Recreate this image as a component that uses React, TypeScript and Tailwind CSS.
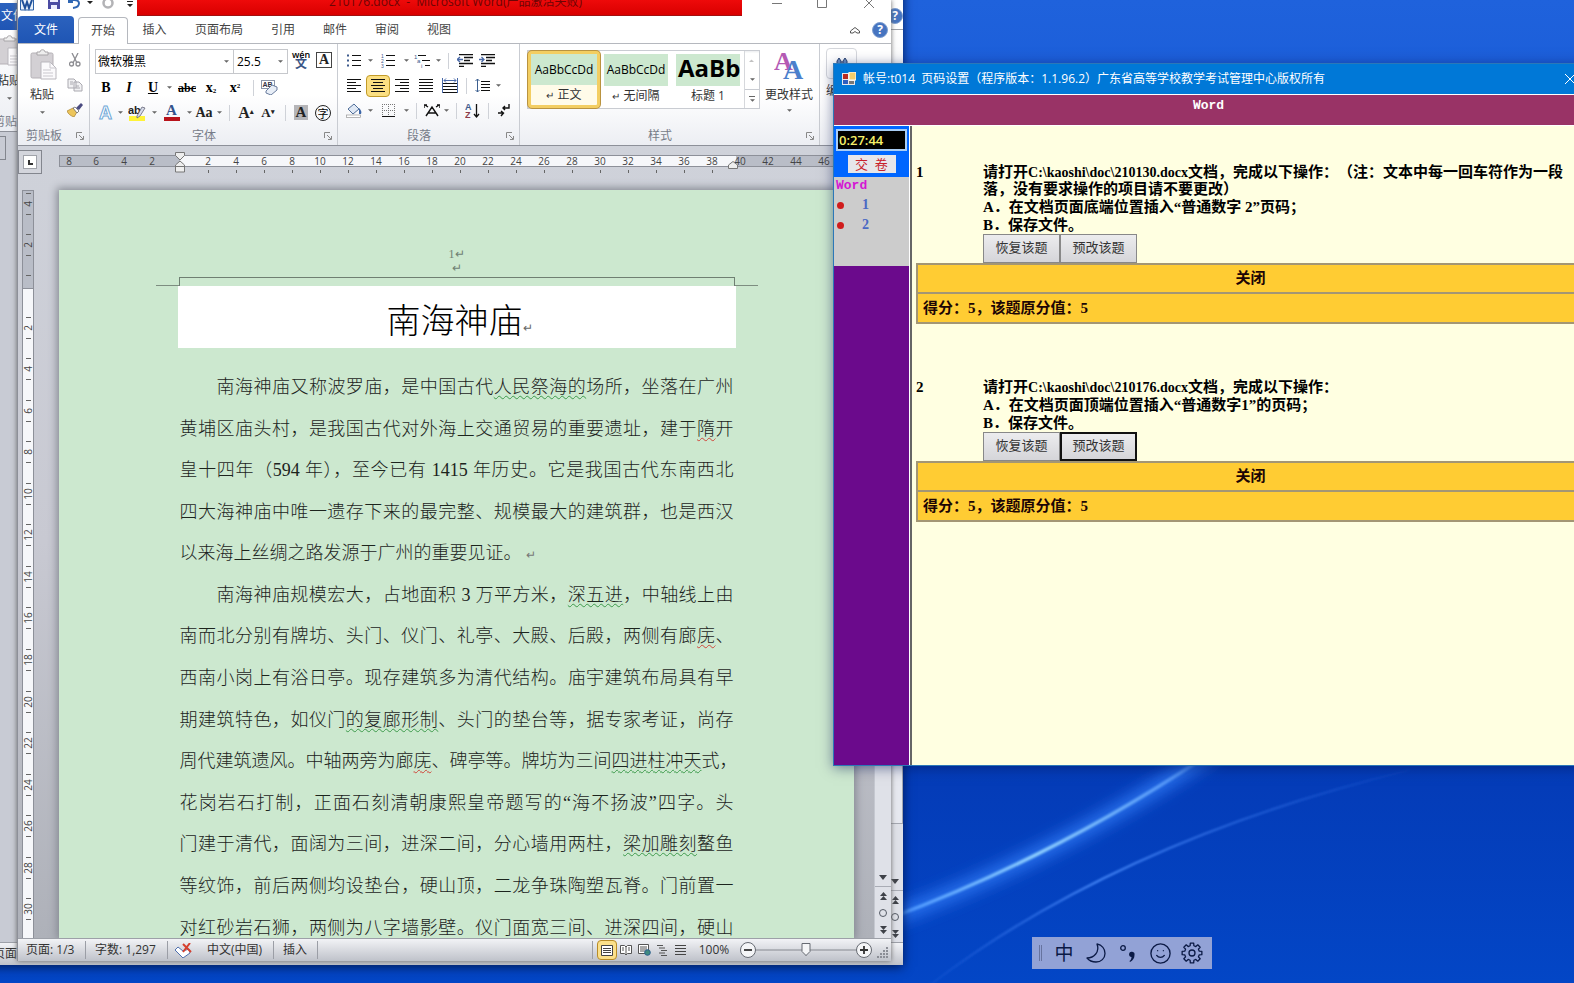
import type { ReactNode } from 'react';
import { Smile } from 'lucide-react';

type Mark = { text: string; mark?: 'grammar' | 'spell' };
type Line = { parts: Mark[]; indent?: boolean; last?: boolean };

const lines: Line[] = [
  { indent: true, parts: [{ text: '南海神庙又称波罗庙，是中国古代' }, { text: '人民祭海的', mark: 'grammar' }, { text: '场所，坐落在广州' }] },
  { parts: [{ text: '黄埔区庙头村，是我国古代对外海上交通贸易的重要遗址，建于' }, { text: '隋', mark: 'spell' }, { text: '开' }] },
  { parts: [{ text: '皇十四年（594 年），至今已有 1415 年历史。它是我国古代东南西北' }] },
  { parts: [{ text: '四大海神庙中唯一遗存下来的最完整、规模最大的建筑群，也是西汉' }] },
  { last: true, parts: [{ text: '以来海上丝绸之路发源于广州的重要见证。' }] },
  { indent: true, parts: [{ text: '南海神庙规模宏大，占地面积 3 万平方米，' }, { text: '深五进', mark: 'grammar' }, { text: '，中轴线上由' }] },
  { parts: [{ text: '南而北分别有牌坊、头门、仪门、礼亭、大殿、后殿，两侧有廊' }, { text: '庑', mark: 'spell' }, { text: '、' }] },
  { parts: [{ text: '西南小岗上有浴日亭。现存建筑多为清代结构。庙宇建筑布局具有早' }] },
  { parts: [{ text: '期建筑特色，如仪门' }, { text: '的复廊形制', mark: 'grammar' }, { text: '、头门的垫台等，据专家考证，尚存' }] },
  { parts: [{ text: '周代建筑遗风。中轴两旁为廊' }, { text: '庑', mark: 'spell' }, { text: '、碑亭等。牌坊为三间' }, { text: '四进柱冲天', mark: 'grammar' }, { text: '式，' }] },
  { parts: [{ text: '花岗岩石打制，正面石刻清朝康熙皇帝题写的“海不扬波”四字。头' }] },
  { parts: [{ text: '门建于清代，面阔为三间，进深二间，分心墙用两柱，' }, { text: '梁加雕刻', mark: 'grammar' }, { text: '鳌鱼' }] },
  { parts: [{ text: '等纹饰，前后两侧均设垫台，硬山顶，二龙争珠陶塑瓦脊。门前置一' }] },
  { parts: [{ text: '对红砂岩石狮，两侧为八字墙影壁。仪门面宽三间、进深四间，硬山' }] },
];

const tabs = [
  { name: '插入', w: 'w-[53px]' },
  { name: '页面布局', w: 'w-[76px]' },
  { name: '引用', w: 'w-[52px]' },
  { name: '邮件', w: 'w-[52px]' },
  { name: '审阅', w: 'w-[52px]' },
  { name: '视图', w: 'w-[52px]' },
];

function Arrow() {
  return (
    <svg viewBox="0 0 6 3" className="w-[5px] h-[3px] shrink-0" fill="#666"><path d="M0 0h6L3 3z" /></svg>
  );
}

function Tool({ w, label, children, active }: { w: string; label: string; children: ReactNode; active?: boolean }) {
  return (
    <button
      type="button"
      aria-label={label}
      className={`${w} h-[22px] shrink-0 flex items-center justify-center leading-none ${active ? 'rounded-sm border border-[#c29b29] bg-[#fbdf82]' : ''}`}
    >
      {children}
    </button>
  );
}

function Sep({ w }: { w: string }) {
  return <div className={`${w} shrink-0 flex justify-center`}><div className="w-px h-4 bg-[#cfd2d8]" /></div>;
}

function Launcher() {
  return (
    <svg viewBox="0 0 8 8" className="w-2 h-2" fill="none" stroke="#888">
      <path d="M.5 6V.5H6M3 3l4 4M7.500 4v3.500H4" />
    </svg>
  );
}

function Group({ name, w, children }: { name: string; w: string; children: ReactNode }) {
  return (
    <section className={`${w} shrink-0 h-full flex flex-col border-r border-[#c9ccd2]`}>
      <div className="h-[82px] pt-1">{children}</div>
      <div className="flex-1 flex items-center pr-[5px] text-[12px] leading-4 text-[#777c88]">
        <span className="flex-1 pr-1.5 text-center whitespace-nowrap">{name}</span>
        <Launcher />
      </div>
    </section>
  );
}

function Clipboard() {
  return (
    <Group name="剪贴板" w="w-[72px]">
      <div className="flex h-full">
        <button type="button" className="w-12 flex flex-col items-center text-[12px] leading-4 text-[#333]">
          <svg viewBox="0 0 28 32" className="w-7 h-8 mt-px mb-1.5 ml-1">
            <rect x="1" y="4" width="22" height="25" rx="1.500" fill="#d3d0d4" stroke="#b5b1b6" />
            <path d="M7 6V3h3c0-3 5-3 5 0h3v3z" fill="#eee" stroke="#a8a5a8" />
            <path d="M11 13h9l6 6v11H11z" fill="#fbfafc" stroke="#b9b7bd" />
            <path d="M20 13v6h6M13 21h8M13 24h10M13 27h10" fill="none" stroke="#c9c7cd" />
          </svg>
          粘贴
          <span className="mt-2"><Arrow /></span>
        </button>
        <div className="flex flex-col gap-[3px] pt-px">
          <Tool w="w-[18px]" label="剪切">
            <svg viewBox="0 0 12 14" className="w-3 h-3.5" fill="none" stroke="#8d8d92" strokeWidth="1.300">
              <path d="M3 0l5 10M9 0L4 10" /><circle cx="2.500" cy="11" r="2" /><circle cx="9" cy="11" r="2" />
            </svg>
          </Tool>
          <Tool w="w-[18px]" label="复制">
            <svg viewBox="0 0 16 14" className="w-4 h-3.5" fill="#f1f1f3" stroke="#aaa9b0">
              <path d="M1 1h6l2 2v7H1zM7 4h5l3 3v6H7z" /><path d="M9 8h3M9 10h4M3 4h3M3 6h3" />
            </svg>
          </Tool>
          <Tool w="w-[18px]" label="格式刷">
            <svg viewBox="0 0 16 14" className="w-4 h-3.5">
              <path d="M0 8l6-3 4 4-3 5C4 13 1 11 0 8z" fill="#edc65c" stroke="#a97f28" strokeWidth=".7" />
              <path d="M6 5l2-1 4 4-2 2z" fill="#fff" stroke="#555" strokeWidth=".7" />
              <path d="M9 5l5-5 2 2-4 5z" fill="#4a4b80" />
            </svg>
          </Tool>
        </div>
      </div>
    </Group>
  );
}

function FontGroup() {
  return (
    <Group name="字体" w="w-[248px]">
      <div className="pl-[5px] flex flex-col h-full">
        <div className="flex h-[27px] items-start pt-px">
          <div className="flex w-[139px] h-[25px] items-center border border-[#c6c8cc] bg-white pl-0.5 pr-1">
            <input aria-label="字体名称" readOnly value="微软雅黑" className="flex-1 min-w-0 text-[12px] leading-4 text-black bg-transparent outline-none" />
            <Arrow />
          </div>
          <div className="flex w-[54px] h-[25px] items-center border border-l-0 border-[#c6c8cc] bg-white pl-[3px] pr-1">
            <input aria-label="字号" readOnly value="25.5" className="flex-1 min-w-0 text-[12px] leading-4 text-black bg-transparent outline-none" />
            <Arrow />
          </div>
          <Tool w="w-[26px]" label="拼音指南">
            <span className="flex flex-col items-center">
              <span className="text-[9px] leading-[6px] font-semibold text-black">wén</span>
              <span className="text-[12px] leading-[11px] text-[#3a5585] font-bold">文</span>
            </span>
          </Tool>
          <Tool w="w-[20px]" label="字符边框">
            <span className="w-4 h-4 border border-[#444] font-['Liberation_Serif',serif] font-bold text-[14px] leading-[14px] text-[#222]">A</span>
          </Tool>
        </div>
        <div className="flex items-center h-[25px] font-['Liberation_Serif',serif] text-[14px] font-bold text-black">
          <Tool w="w-[22px]" label="加粗">B</Tool>
          <Tool w="w-6" label="倾斜"><i>I</i></Tool>
          <Tool w="w-6" label="下划线"><u>U</u></Tool>
          <Tool w="w-2" label="下划线样式"><Arrow /></Tool>
          <Tool w="w-7" label="删除线"><s className="text-[12px]">abc</s></Tool>
          <Tool w="w-5" label="下标"><span>x<sub className="text-[7px]">2</sub></span></Tool>
          <Tool w="w-7" label="上标"><span>x<sup className="text-[7px]">2</sup></span></Tool>
          <Sep w="w-2" />
          <Tool w="w-6" label="清除格式">
            <svg viewBox="0 0 17 15" className="w-[17px] h-[15px]">
              <rect x=".5" y=".5" width="13" height="8" fill="#fff" stroke="#8b95a8" />
              <text x="1.500" y="7" fontSize="7" fontWeight="700" fontFamily="Liberation Sans" fill="#334">AB</text>
              <path d="M5 11l6-6 5 2v3l-6 5-5-2z" fill="#e8eef7" stroke="#6a7d9e" />
            </svg>
          </Tool>
        </div>
        <div className="flex items-center h-[25px] font-['Liberation_Serif',serif] font-bold text-[#222]">
          <Tool w="w-[21px]" label="文本效果"><span className="text-[18px] text-white [-webkit-text-stroke:1px_#6fa8d8] font-['Liberation_Sans',sans-serif]">A</span></Tool>
          <Tool w="w-2" label="文本效果选项"><Arrow /></Tool>
          <Tool w="w-[26px]" label="突出显示">
            <svg viewBox="0 0 18 16" className="w-[18px] h-4">
              <rect x="1" y="11" width="16" height="5" fill="#fff338" />
              <text x="0" y="9" fontSize="11" fontFamily="Liberation Sans" fill="#222">ab</text>
              <path d="M9 11l5-9 3 1-5 8-3 2z" fill="#d8dcea" stroke="#667" strokeWidth=".8" />
            </svg>
          </Tool>
          <Tool w="w-2" label="突出显示颜色"><Arrow /></Tool>
          <Tool w="w-[27px]" label="字体颜色"><span className="w-4 text-[15px] leading-[13px] text-[#34538c] border-b-4 border-[#b8131b]">A</span></Tool>
          <Tool w="w-2" label="字体颜色选项"><Arrow /></Tool>
          <Tool w="w-[22px]" label="更改大小写"><span className="text-[14px]">Aa</span></Tool>
          <Tool w="w-2" label="大小写选项"><Arrow /></Tool>
          <Sep w="w-3" />
          <Tool w="w-[22px]" label="增大字体"><span className="text-[16px]">A<sup className="text-[7px]">▴</sup></span></Tool>
          <Tool w="w-[22px]" label="缩小字体"><span className="text-[13px]">A<sup className="text-[7px]">▾</sup></span></Tool>
          <Sep w="w-3" />
          <Tool w="w-5" label="字符底纹"><span className="w-3.5 text-[15px] leading-[15px] bg-[#b5b5b8]">A</span></Tool>
          <Tool w="w-6" label="带圈字符"><span className="w-4 h-4 rounded-full border border-[#222] text-[11px] leading-[14px] font-['Noto_Sans_CJK_SC',sans-serif] font-normal text-black">字</span></Tool>
        </div>
      </div>
    </Group>
  );
}

const bars = {
  left: 'M0 .5h14M0 3.500h9M0 6.500h14M0 9.500h9M0 12.500h14',
  center: 'M0 .5h14M2 3.500h10M0 6.500h14M2 9.500h10M0 12.500h14',
  right: 'M0 .5h14M5 3.500h9M0 6.500h14M5 9.500h9M0 12.500h14',
  justify: 'M0 .5h14M0 3.500h14M0 6.500h14M0 9.500h14M0 12.500h14',
};

function Bars({ d }: { d: string }) {
  return <svg viewBox="0 0 14 13" className="w-3.5 h-[13px]" stroke="#111" strokeWidth="1.200"><path d={d} /></svg>;
}

function ParagraphGroup() {
  return (
    <Group name="段落" w="w-[182px]">
      <div className="pl-1 flex flex-col h-full text-[#222]">
        <div className="flex items-center h-[25px]">
          <Tool w="w-6" label="项目符号">
            <svg viewBox="0 0 14 14" className="w-3.5 h-3.5" stroke="#111" fill="#3d5a8c"><path d="M5 1.500h9M5 6.500h9M5 11.500h9" /><path d="M0 .5h2v2H0zM0 5.500h2v2H0zM0 10.500h2v2H0z" stroke="none" /></svg>
          </Tool>
          <Tool w="w-2" label="项目符号库"><Arrow /></Tool>
          <Tool w="w-7" label="编号">
            <svg viewBox="0 0 14 14" className="w-3.5 h-3.5" stroke="#111">
              <path d="M5 1.500h9M5 6.500h9M5 11.500h9" />
              <g fontSize="5" fontFamily="Liberation Sans" fill="#3d5a8c" stroke="none"><text x="0" y="4">1</text><text x="0" y="9">2</text><text x="0" y="14">3</text></g>
            </svg>
          </Tool>
          <Tool w="w-2" label="编号库"><Arrow /></Tool>
          <Tool w="w-6" label="多级列表">
            <svg viewBox="0 0 16 14" className="w-4 h-3.5" stroke="#111">
              <path d="M4 1.500h8M8 6.500h8M11 11.500h5" />
              <g fontSize="6" fontFamily="Liberation Sans" fill="#3d5a8c" stroke="none"><text x="0" y="5">1</text><text x="3" y="9">a</text><text x="7" y="14">i</text></g>
            </svg>
          </Tool>
          <Tool w="w-2" label="列表库"><Arrow /></Tool>
          <Sep w="w-3" />
          <Tool w="w-[22px]" label="减少缩进">
            <svg viewBox="0 0 16 13" className="w-4 h-[13px]" stroke="#111" strokeWidth="1.300"><path d="M2 .5h14M7 3.500h9M7 6.500h6M2 9.500h14M2 12.500h5" /><path d="M0 5.500h6M3 3L0 5.500 3 8" fill="none" stroke="#4a6aa8" /></svg>
          </Tool>
          <Tool w="w-[22px]" label="增加缩进">
            <svg viewBox="0 0 16 13" className="w-4 h-[13px]" stroke="#111" strokeWidth="1.300"><path d="M2 .5h14M7 3.500h9M7 6.500h6M2 9.500h14M2 12.500h5" /><path d="M0 5.500h5M2.500 3L5 5.500 2.500 8" fill="none" stroke="#4a6aa8" /></svg>
          </Tool>
        </div>
        <div className="flex items-center h-[25px]">
          <Tool w="w-6" label="左对齐"><Bars d={bars.left} /></Tool>
          <Tool w="w-6" label="居中" active><Bars d={bars.center} /></Tool>
          <Tool w="w-6" label="右对齐"><Bars d={bars.right} /></Tool>
          <Tool w="w-6" label="两端对齐"><Bars d={bars.justify} /></Tool>
          <Tool w="w-6" label="分散对齐">
            <svg viewBox="0 0 16 15" className="w-4 h-[15px]" fill="none" stroke="#111"><path d="M1 5.500h14M1 8.500h14M1 11.500h14M1 14.500h14" /><path d="M.5 0v15M15.500 0v15M2 2.500h12M4 .5l-2 2 2 2M12 .5l2 2-2 2" stroke="#4a6aa8" /></svg>
          </Tool>
          <Sep w="w-2" />
          <Tool w="w-6" label="行距">
            <svg viewBox="0 0 15 15" className="w-[15px] h-[15px]" fill="none" stroke="#111"><path d="M6 3.500h9M6 6.500h9M6 9.500h9M6 12.500h9" /><path d="M2.500 1v13M.5 3l2-2 2 2M.5 12l2 2 2-2" stroke="#3d6090" /></svg>
          </Tool>
          <Tool w="w-2" label="行距选项"><Arrow /></Tool>
        </div>
        <div className="flex items-center h-[25px]">
          <Tool w="w-6" label="底纹">
            <svg viewBox="0 0 16 15" className="w-4 h-[15px]"><path d="M2 6l6-5 5 5-6 5z" fill="#dfe8f4" stroke="#4f6d98" /><path d="M13 5c2 2 3 4 2 6h-2z" fill="#3c66a8" /><rect x=".5" y="12" width="14" height="2.500" fill="#fff" stroke="#999" strokeWidth=".7" /></svg>
          </Tool>
          <Tool w="w-2" label="底纹颜色"><Arrow /></Tool>
          <Tool w="w-7" label="边框">
            <svg viewBox="0 0 13 13" className="w-[13px] h-[13px]" fill="none" stroke="#777" strokeDasharray="1 1"><path d="M.5 0v12M6.500 0v12M12.500 0v12M0 .5h13M0 6.500h13" /><path d="M0 12.500h13" stroke="#111" strokeDasharray="none" /></svg>
          </Tool>
          <Tool w="w-2" label="边框选项"><Arrow /></Tool>
          <Sep w="w-3" />
          <Tool w="w-5" label="中文版式">
            <svg viewBox="0 0 16 13" className="w-4 h-[13px]" fill="none" stroke="#111" strokeWidth="1.400"><path d="M2 12l6-9 6 9M4.500 9h7M1 1l3 2M15 1l-3 2M0 4V1h3M16 4V1h-3" /></svg>
          </Tool>
          <Tool w="w-2" label="版式选项"><Arrow /></Tool>
          <Sep w="w-3" />
          <Tool w="w-5" label="排序">
            <svg viewBox="0 0 15 16" className="w-[15px] h-4">
              <g fontSize="9" fontWeight="700" fontFamily="Liberation Sans"><text x="0" y="7" fill="#3d5a8c">A</text><text x="0" y="15" fill="#8c3d4a">Z</text></g>
              <path d="M11.500 1v13M9 11l2.500 3 2.500-3" fill="none" stroke="#111" strokeWidth="1.300" />
            </svg>
          </Tool>
          <Sep w="w-3" />
          <Tool w="w-5" label="显示编辑标记">
            <svg viewBox="0 0 12 13" className="w-3 h-[13px]" fill="none" stroke="#111" strokeWidth="1.400"><path d="M11 0v4H5M7 2L5 4l2 2M0 9h5M3 7l2.500 2L3 12" /></svg>
          </Tool>
        </div>
      </div>
    </Group>
  );
}

function StyleGroup() {
  return (
    <Group name="样式" w="w-[300px]">
      <div className="pl-[7px] flex h-full">
        <div className="flex w-[233px] h-[59px] mt-0.5 border border-[#c9ccd2] bg-white">
          <button type="button" className="w-[72px] h-[57px] rounded-sm border-[3px] border-[#f3ce62] ring-1 ring-[#b99340] bg-[#fffbe9] flex flex-col text-[12px] text-[#333]">
            <span className="w-full h-8 bg-[#cce8cf] leading-[32px] text-[12px] text-black overflow-hidden">AaBbCcDd</span>
            <span className="w-full leading-[19px]"><small>↵</small> 正文</span>
          </button>
          <button type="button" className="w-[72px] px-1 pt-[3px] flex flex-col text-[12px] text-[#333]">
            <span className="w-full h-8 bg-[#cce8cf] leading-[32px] text-[12px] text-black overflow-hidden">AaBbCcDd</span>
            <span className="w-full leading-[19px] whitespace-nowrap"><small>↵</small> 无间隔</span>
          </button>
          <button type="button" className="w-[72px] px-1 pt-[3px] flex flex-col text-[12px] text-[#333]">
            <span className="w-full h-8 bg-[#cce8cf] leading-[28px] text-[24px] font-bold text-black text-left pl-0.5 overflow-hidden whitespace-nowrap">AaBb</span>
            <span className="w-full leading-[19px]">标题 1</span>
          </button>
          <div className="flex-1 flex flex-col border-l border-[#d6d8dc] divide-y divide-[#c9ccd2]">
            <button type="button" aria-label="上一行" className="flex-1 flex items-center justify-center rotate-180 opacity-40"><Arrow /></button>
            <button type="button" aria-label="下一行" className="flex-1 flex items-center justify-center"><Arrow /></button>
            <button type="button" aria-label="其他样式" className="flex-1 flex flex-col gap-0.5 items-center justify-center"><span className="w-[6px] h-px bg-[#666]" /><Arrow /></button>
          </div>
        </div>
        <button type="button" className="w-[58px] flex flex-col items-center text-[12px] leading-4 text-[#333] whitespace-nowrap">
          <svg viewBox="0 0 30 30" className="w-[30px] h-[30px] mt-[3px] mb-1.5">
            <g fontFamily="Liberation Serif" fontWeight="700"><text x="0" y="19" fontSize="26" fill="#b45ab4">A</text><text x="9" y="28" fontSize="28" fill="#4c80cc">A</text></g>
          </svg>
          更改样式
          <span className="mt-1.5"><Arrow /></span>
        </button>
      </div>
    </Group>
  );
}

function Help() {
  return <button type="button" aria-label="帮助" className="w-4 h-4 rounded-full bg-[#4674c0] border border-[#7f9fd0] text-white text-[12px] font-bold leading-[14px] shrink-0">?</button>;
}

function FileTab() {
  return <button type="button" className="w-14 h-[27px] rounded-t-sm bg-linear-to-b from-[#2b62be] to-[#1f55b4] text-white text-[12px] shrink-0">文件</button>;
}

function ScrollEnd({ h }: { h: string }) {
  return (
    <div className="w-[17px] shrink-0 h-full flex flex-col justify-end bg-[#dfe1e8] border-l border-[#c5c8d0]">
      <div className={`${h} flex items-end justify-center pb-1.5`}>
        <svg viewBox="0 0 8 5" className="w-2 h-[5px]" fill="#3e4148"><path d="M0 0h8L4 5z" /></svg>
      </div>
      <div className="h-[52px] border-t border-[#a9acb5] flex flex-col items-center justify-around">
        <svg viewBox="0 0 7 8" className="w-[7px] h-2" fill="#3e4148"><path d="M3.500 0L7 4H0zM3.500 4L7 8H0z" /></svg>
        <span className="w-2 h-2 rounded-full border border-[#555a65]" />
        <svg viewBox="0 0 7 8" className="w-[7px] h-2" fill="#3e4148"><path d="M0 0h7L3.500 4zM0 4h7L3.500 8z" /></svg>
      </div>
    </div>
  );
}

function StatusSep() {
  return <span className="w-px h-[18px] bg-[#9b9ea6]" />;
}

function StatusBar() {
  return (
    <footer className="h-[23px] shrink-0 flex items-center bg-linear-to-b from-[#f2f3f6] to-[#bfc2ca] border-t border-[#9da0a8] text-[12px] text-[#333] whitespace-nowrap">
      <span className="w-[67px] pl-2">页面: 1/3</span>
      <StatusSep />
      <span className="w-[81px] pl-[9px]">字数: 1,297</span>
      <StatusSep />
      <span className="w-[31px] flex justify-center">
        <svg viewBox="0 0 17 15" className="w-[17px] h-[15px]"><path d="M0 7l3-3 5 4 6-2 1 4-7 5z" fill="#fff" stroke="#4e6fae" /><path d="M8 1l8 8M15 0L8 9" stroke="#d6412f" strokeWidth="2" /></svg>
      </span>
      <span className="w-[74px] pl-2">中文(中国)</span>
      <StatusSep />
      <span className="w-[43px] pl-[9px]">插入</span>
      <StatusSep />
      <span className="flex-1" />
      <StatusSep />
      <button type="button" aria-label="页面视图" className="ml-1 w-5 h-5 flex items-center justify-center rounded-sm border border-[#b88c28] bg-[#fbe08a]">
        <svg viewBox="0 0 12 11" className="w-3 h-[11px]" fill="#fff" stroke="#444"><path d="M.5.5h11v10H.5zM2 3.500h8M2 5.500h8M2 7.500h8" /></svg>
      </button>
      <button type="button" aria-label="阅读版式" className="w-[18px] flex justify-center">
        <svg viewBox="0 0 12 11" className="w-3 h-[11px]" fill="#fff" stroke="#555"><path d="M.5.5h4L6 2 7.500.5h4v8h-4L6 10 4.500 8.500h-4zM6 2v8M2 3h2M2 5h2M8 3h2M8 5h2" /></svg>
      </button>
      <button type="button" aria-label="网页版式" className="w-[18px] flex justify-center">
        <svg viewBox="0 0 13 12" className="w-[13px] h-3" fill="#fff" stroke="#555"><path d="M.5.5h10v9H.5zM2 3h7M2 5h7M2 7h5" /><circle cx="9.500" cy="8.500" r="2.800" fill="#3f8a80" stroke="#2a5f8f" /></svg>
      </button>
      <button type="button" aria-label="大纲视图" className="w-[18px] flex justify-center">
        <svg viewBox="0 0 10 11" className="w-2.5 h-[11px]" stroke="#555"><path d="M0 .5h6M2 3h6M4 5.500h6M2 8h6M4 10.500h6" /></svg>
      </button>
      <button type="button" aria-label="草稿" className="w-[18px] flex justify-center">
        <svg viewBox="0 0 11 11" className="w-[11px] h-[11px]" stroke="#444"><path d="M0 .5h11M0 3.500h11M0 6.500h11M0 9.500h11" /></svg>
      </button>
      <span className="w-[50px] text-center">100%</span>
      <svg viewBox="0 0 134 18" className="w-[134px] h-[18px]">
        <path d="M16 9h102M67 3v12" stroke="#85888f" />
        <circle cx="9" cy="9" r="7.500" fill="#f4f5f7" stroke="#666a72" /><path d="M5 9h8" stroke="#333" strokeWidth="1.800" />
        <circle cx="125" cy="9" r="7.500" fill="#f4f5f7" stroke="#666a72" /><path d="M121 9h8M125 5v8" stroke="#333" strokeWidth="1.800" />
        <path d="M63 2.500h8v8l-4 4-4-4z" fill="#f4f5f7" stroke="#666a72" />
      </svg>
      <svg viewBox="0 0 12 12" className="w-3 h-3 ml-1 mr-0.5 mt-1.5" fill="#8b8e96"><path d="M9 0h2v2H9zM9 3h2v2H9zM9 6h2v2H9zM9 9h2v2H9zM6 3h2v2H6zM6 6h2v2H6zM6 9h2v2H6zM3 6h2v2H3zM3 9h2v2H3zM0 9h2v2H0z" /></svg>
    </footer>
  );
}

function HorizontalRuler() {
  const margin = ['6', '4', '2'];
  const body = Array.from({ length: 23 }, (_, i) => String((i + 1) * 2));
  return (
    <div className="h-11 shrink-0 flex pt-1 text-[10px] leading-[11px] text-[#444]">
      <div className="w-[24px] h-6 shrink-0 border border-[#83868e] bg-[#d3d5dc] flex items-center justify-center">
        <div className="w-3.5 h-3.5 border border-[#a0a3aa] bg-white flex items-center justify-center"><div className="w-[5px] h-[5px] border-l-2 border-b-2 border-[#333]" /></div>
      </div>
      <div className="relative ml-[17px] mt-[5px] flex flex-1 h-3 border-y border-l border-[#8d9099] bg-[#b9bdc7]">
        <span className="w-[22px] shrink-0 pr-1 text-center">8</span>
        {margin.map((n) => <span key={n} className="w-7 shrink-0 text-center">{n}</span>)}
        <div className="w-[14px] shrink-0" />
        <div className="w-[556px] shrink-0 bg-[#f6f7fa]" />
        <div className="absolute top-0 left-[134px] flex">
          {body.map((n) => (
            <span key={n} className="w-7 shrink-0 flex flex-col items-center">
              {n}
              {Number(n) < 40 && <span className="mt-[3px] w-px h-[3px] bg-[#666]" />}
            </span>
          ))}
        </div>
        <svg viewBox="0 0 10 21" className="absolute w-2.5 h-[21px] left-[115px] -top-[4px]" fill="#eee" stroke="#777"><path d="M.5.5h9v3L5 8 .5 3.500zM5 9l4.500 4v7H.5v-7zM.5 14.500h9" /></svg>
        <svg viewBox="0 0 10 8" className="absolute w-2.5 h-2 left-[668px] top-[5px]" fill="#eee" stroke="#777"><path d="M5 .5L9.500 4v3.500h-9V4z" /></svg>
      </div>
    </div>
  );
}

function VerticalMark({ n }: { n: string }) {
  return (
    <div className="flex flex-col items-center gap-[5px]">
      <span className="w-[5px] h-px bg-[#666]" />
      <span className="h-2.5 w-2.5 flex items-center justify-center"><span className="-rotate-90">{n}</span></span>
      <span className="w-[5px] h-px bg-[#666]" />
    </div>
  );
}

function VerticalRuler() {
  const nums = Array.from({ length: 15 }, (_, i) => String((i + 1) * 2));
  return (
    <div className="w-3 shrink-0 h-full overflow-hidden flex flex-col border-x border-t border-[#8d9099] bg-[#f6f7fa] text-[10px] leading-none text-[#444]">
      <div className="h-[98px] shrink-0 bg-[#b9bdc7] border-b border-[#8d9099] flex flex-col items-center pt-0.5 gap-[19px]">
        <VerticalMark n="4" />
        <VerticalMark n="2" />
        <span className="w-[5px] h-px bg-[#666]" />
      </div>
      <div className="h-[641px] shrink-0 pt-[18px] flex flex-col">
        {nums.map((n) => <div key={n} className="flex-1 flex items-center justify-center"><VerticalMark n={n} /></div>)}
      </div>
    </div>
  );
}

function Page() {
  return (
    <article className="w-[795px] shrink-0 h-full overflow-hidden bg-[#cce8cf] shadow-[0_0_8px_2px_#858992] flex flex-col items-center text-[#1c241d]">
      <div className="h-[87px] shrink-0 pt-[57px] text-[12px] leading-[14px] text-center text-[#6f8073] font-['Liberation_Serif','Noto_Sans_CJK_SC',serif]">
        <div>1↵</div>
        <div>↵</div>
      </div>
      <div className="w-[602px] h-[9px] shrink-0 flex">
        <div className="w-[23px] border-b border-[#7d8d80]" />
        <div className="flex-1 border-t border-x border-[#6f7f72]" />
        <div className="w-[23px] border-b border-[#7d8d80]" />
      </div>
      <h1 className="w-[558px] h-[62px] shrink-0 bg-white flex items-center justify-center pl-1.5 pt-1.5 text-[34px] leading-none text-black font-light">
        南海神庙<span className="text-[12px] self-end mb-3.5 text-[#666]">↵</span>
      </h1>
      <div className="w-[554px] h-[582px] shrink-0 mt-[19px] flex flex-col text-[18px] font-light font-['Liberation_Serif','Noto_Sans_CJK_SC',serif]">
        {lines.map((line, i) => (
          <p
            key={i}
            className={`flex-1 leading-[40px] whitespace-nowrap ${line.indent ? 'pl-[37px]' : ''} ${line.last ? '' : '[text-align-last:justify]'}`}
          >
            {line.parts.map((part, j) => (
              <span
                key={j}
                className={part.mark ? `underline decoration-wavy decoration-1 underline-offset-2 ${part.mark === 'spell' ? 'decoration-[#d0453a]' : 'decoration-[#3d9a4b]'}` : ''}
              >
                {part.text}
              </span>
            ))}
            {line.last && <small className="text-[12px] leading-none text-[#777] pl-1">↵</small>}
          </p>
        ))}
      </div>
    </article>
  );
}

function BackWindow() {
  return (
    <section className="absolute -left-[15px] -top-[14px] w-[918px] bottom-[18px] flex flex-col bg-[#c8cbd4] shadow-[0_2px_10px_#001a55]">
      <div className="h-[17px] bg-white" />
      <div className="h-[27px] shrink-0 flex items-center justify-between bg-white border-b border-[#9da0a8]">
        <FileTab />
        <Help />
      </div>
      <div className="h-[102px] shrink-0 flex bg-linear-to-b from-white to-[#eceef3] border-b border-[#8d9099]">
        <Clipboard />
      </div>
      <div className="flex-1 min-h-0 flex justify-between">
        <div className="w-[21px] h-6 mt-1 border border-[#83868e]" />
        <div className="flex flex-col">
          <div className="flex-1 border border-[#a4a7b0] bg-[#e6e8ef]" />
          <div className="h-[118px]"><ScrollEnd h="h-[66px]" /></div>
        </div>
      </div>
      <footer className="h-[23px] shrink-0 flex items-center bg-linear-to-b from-[#f2f3f6] to-[#bfc2ca] border-t border-[#9da0a8] text-[12px] text-[#333]">
        <span className="pl-2">页面:</span>
      </footer>
    </section>
  );
}

function WordWindow() {
  return (
    <section className="absolute left-[17px] top-0 w-[874px] bottom-[22px] flex flex-col bg-white border-l border-[#8d9099] shadow-[0_0_5px_#666]">
      <header className="h-[17px] shrink-0 flex overflow-hidden">
        <div className="w-[119px] shrink-0 flex items-start">
          <svg viewBox="0 0 118 14" className="w-[118px] h-3.5">
            <path d="M2.500-4h13v14h-13z" fill="#e9f1fa" stroke="#2d62a8" />
            <path d="M4 0l3 8 2-6 2 6 3-8" fill="none" stroke="#1f5099" strokeWidth="2" />
            <path d="M30-3h12v12H30z" fill="#4b4ca3" /><path d="M32-3h8v5h-8zM33 5h6v4h-6z" fill="#eef" />
            <path d="M55 8c8-1 8-9 0-8l-4 1M51-3v5h4" fill="none" stroke="#2f66b3" strokeWidth="2" />
            <path d="M69 1h6l-3 3zM109 4h6l-3 3zM109 1h6v1h-6z" fill="#222" />
            <circle cx="90" cy="3" r="4.500" fill="none" stroke="#b3b3b6" strokeWidth="2.500" />
          </svg>
        </div>
        <div className="flex-1 h-4 bg-linear-to-b from-[#ee0a0a] to-[#d90000] border-b border-[#a31010] flex justify-center pl-8">
          <span className="-mt-[7px] text-[12px] leading-[18px] whitespace-pre text-[#6c0505]">210176.docx  -  Microsoft Word(产品激活失败)</span>
        </div>
        <div className="w-[149px] shrink-0 flex">
          <svg viewBox="0 0 149 14" className="w-[149px] h-3.5" fill="none" stroke="#777"><path d="M30 3.500h10M75.500-2v9.500h9V-2M122-2l10 10M132-2l-10 10" /></svg>
        </div>
      </header>
      <nav className="h-[27px] shrink-0 flex items-end border-b border-[#b5b8be] text-[12px] text-[#444]">
        <FileTab />
        <button type="button" className="ml-1 -mb-px w-[50px] h-[27px] bg-white border border-b-0 border-[#b5b8be] rounded-t-sm">开始</button>
        <div className="flex h-[27px]">
          {tabs.map((t) => <button key={t.name} type="button" className={t.w}>{t.name}</button>)}
        </div>
        <div className="flex-1 self-center flex items-center justify-end gap-3 pr-[3px]">
          <svg viewBox="0 0 10 7" className="w-2.5 h-[7px]" fill="none" stroke="#555"><path d="M.5 4L5 .5 9.500 4v2H7L5 4.500 3 6H.5z" /></svg>
          <Help />
        </div>
      </nav>
      <div className="h-[102px] shrink-0 flex overflow-hidden bg-linear-to-b from-white via-white to-[#eceef3] border-b border-[#8d9099]">
        <Clipboard />
        <FontGroup />
        <ParagraphGroup />
        <StyleGroup />
        <div className="pl-1.5 pt-1">
          <button type="button" className="w-[31px] h-[31px] border border-[#d5d7dc] rounded-sm flex justify-center pt-2" aria-label="查找">
            <svg viewBox="0 0 12 10" className="w-3 h-2.5" fill="#6d8fc0" stroke="#2c4470"><path d="M1 9V4l2-3 2 3v5zM7 9V4l2-3 2 3v5zM5 5h2" /></svg>
          </button>
          <span className="block text-[12px] leading-4 mt-1 whitespace-nowrap text-[#333]">编辑</span>
        </div>
      </div>
      <div className="flex-1 min-h-0 flex bg-linear-to-b from-[#cfd2da] via-[#c8c9d2] to-[#aeb1b9]">
        <div className="flex-1 min-w-0 flex flex-col overflow-hidden">
          <HorizontalRuler />
          <div className="flex-1 min-h-0 flex pl-1">
            <VerticalRuler />
            <div className="w-[25px] shrink-0" />
            <Page />
          </div>
        </div>
        <ScrollEnd h="h-[26px]" />
      </div>
      <StatusBar />
    </section>
  );
}

type Question = { no: string; intro: ReactNode; steps: string[]; focused?: boolean };

function FilePath({ name }: { name: string }) {
  return <span className="text-[14px]">C:\kaoshi\doc\{name}</span>;
}

const questions: Question[] = [
  {
    no: '1',
    intro: <>请打开<FilePath name="210130.docx" />文档，完成以下操作：（注：文本中每一回车符作为一段<br />落，没有要求操作的项目请不要更改）</>,
    steps: ['A．在文档页面底端位置插入“普通数字 2”页码；', 'B．保存文件。'],
  },
  {
    no: '2',
    intro: <>请打开<FilePath name="210176.docx" />文档，完成以下操作：</>,
    steps: ['A．在文档页面顶端位置插入“普通数字1”的页码；', 'B．保存文件。'],
    focused: true,
  },
];

function QuestionBlock({ q }: { q: Question }) {
  const button = "w-[77px] h-[29px] border bg-linear-to-b from-[#ececee] to-[#d5d5d9] pb-0.5 text-[13px] font-normal text-[#333] font-['Open_Sans','Noto_Sans_CJK_SC',sans-serif]";
  return (
    <section className="text-[15px] font-bold text-black font-['Liberation_Serif','Noto_Sans_CJK_SC',serif] [text-spacing-trim:space-all]">
      <div className="flex whitespace-nowrap">
        <span className="w-[67px] shrink-0 leading-[16px]">{q.no}</span>
        <div>
          <p className="leading-[17px]">{q.intro}</p>
          {q.steps.map((s) => <p key={s} className="leading-[18px]">{s}</p>)}
          <div className="flex">
            <button type="button" className={`${button} border-[#888]`}>恢复该题</button>
            <button type="button" className={`${button} ${q.focused ? 'border-2 border-[#111]' : 'border-[#888]'}`}>预改该题</button>
          </div>
        </div>
      </div>
      <table className="w-full border-collapse bg-[#ffcc33] text-[#1c0505]">
        <tbody>
          <tr><td className="h-[29px] border-2 border-r-0 border-[#a39674] pb-0.5 text-center leading-[18px]">关闭</td></tr>
          <tr><td className="h-[30px] border-2 border-r-0 border-[#a39674] pl-[5px] leading-[18px]">得分：5，该题原分值：5</td></tr>
        </tbody>
      </table>
    </section>
  );
}

function ExamWindow() {
  return (
    <section className="absolute left-[833px] -right-2.5 top-[63px] h-[703px] flex flex-col border border-[#2b78b8] bg-white shadow-[0_2px_12px_rgba(0,20,80,0.5)]">
      <header className="h-[30px] shrink-0 flex items-center bg-[#0078d7] text-white text-[12px] whitespace-nowrap overflow-hidden pr-2">
        <svg viewBox="0 0 14 14" className="w-3.5 h-3.5 ml-2 mr-[7px] shrink-0">
          <path d="M0 1h13v12H0z" fill="#e8e8ea" /><path d="M1 2h5v5H1z" fill="#b92c23" /><path d="M7 0h7v8H7z" fill="#f4cf6a" stroke="#fff" /><path d="M1 8h5v4H1z" fill="#2e5fc0" /><path d="M7 9h5v3H7z" fill="#777" />
        </svg>
        <h2 className="flex-1 whitespace-pre">帐号:t014  页码设置（程序版本：1.1.96.2）广东省高等学校教学考试管理中心版权所有</h2>
        <button type="button" aria-label="关闭窗口">
          <svg viewBox="0 0 10 10" className="w-2.5 h-2.5" stroke="#fff"><path d="M0 0l10 10M10 0L0 10" /></svg>
        </button>
      </header>
      <div className="h-[30px] shrink-0 mt-px bg-[#993366] text-white text-center text-[13px] font-bold leading-[22px] font-['Liberation_Mono',monospace]">Word</div>
      <div className="flex-1 min-h-0 flex mt-px">
        <aside className="w-[75px] shrink-0 flex flex-col bg-[#6b0a8c]">
          <div className="h-[51px] bg-[#0066ff] pt-[3px] px-0.5">
            <input aria-label="剩余时间" readOnly value="0:27:44" className="block w-full h-[22px] bg-black border-2 border-[#a9cdf5] pl-px text-[13px] font-semibold text-[#f5f06a] outline-none" />
            <button type="button" className="block mx-auto mt-1 w-12 h-[18px] bg-[#e6e6ea] text-[#c8202a] text-[13px] leading-[18px] whitespace-pre">交  卷</button>
          </div>
          <div className="h-[89px] bg-[#cccccc] pl-0.5 font-bold text-[13px] font-['Liberation_Mono',monospace]">
            <div className="leading-[18px] text-[#d416d4]">Word</div>
            <ul className="text-[14px] leading-[20px] font-['Liberation_Serif',serif] text-[#4a69c4]">
              {['1', '2'].map((n) => (
                <li key={n} className="flex items-center"><span className="w-[7px] h-[7px] rounded-full bg-[#d01c1c] mr-[18px] ml-px" /><a href={`#q${n}`}>{n}</a></li>
              ))}
            </ul>
          </div>
        </aside>
        <main className="flex-1 min-w-0 border-l-2 border-[#666] ml-px bg-[#ffffe1] pl-1 pt-[38px] flex flex-col gap-[55px] overflow-hidden">
          {questions.map((q) => <div key={q.no} id={`q${q.no}`}><QuestionBlock q={q} /></div>)}
        </main>
      </div>
    </section>
  );
}

// eight flat teeth around a small hub
const gear = Array.from({ length: 8 }, (_, i) => {
  const tooth: [number, number][] = [[-0.25, 7.5], [-0.17, 10], [0.17, 10], [0.25, 7.5]];
  return tooth
    .map(([offset, r]) => {
      const a = (i * Math.PI) / 4 + offset;
      return `${(11 + r * Math.sin(a)).toFixed(2)},${(11 - r * Math.cos(a)).toFixed(2)}`;
    })
    .join(' ');
}).join(' ');

function ImeBar() {
  return (
    <div className="absolute left-[1032px] bottom-[14px] w-[180px] h-8 bg-[#92a2d6] flex items-center text-[#0b1a45]">
      <div className="w-4 pr-1.5 flex justify-end"><div className="w-[3px] h-4 border-x border-[#66739f]" /></div>
      <button type="button" className="w-8 text-[19px] leading-none">中</button>
      <button type="button" aria-label="半角" className="w-8 flex justify-center">
        <svg viewBox="0 0 20 20" className="w-5 h-5" fill="none" stroke="#0b1a45" strokeWidth="1.300" strokeLinejoin="round"><path d="M11 1c5 1 8 5 8 9.500C19 15.500 15 19 10 19c-3.500 0-7-1.500-9-4C8 15 14 9 11 1z" /></svg>
      </button>
      <button type="button" aria-label="标点" className="w-8 flex justify-center">
        <svg viewBox="0 0 18 20" className="w-[18px] h-5"><circle cx="4" cy="5" r="2.300" fill="none" stroke="#0b1a45" strokeWidth="1.300" /><path d="M10 11a2.700 2.700 0 1 1 5.500 1c0 3-1.500 5.500-4.500 7l-.5-1c1.500-1 2-2.500 2-4-1.500 0-2.500-1-2.500-3z" fill="#0b1a45" /></svg>
      </button>
      <button type="button" aria-label="表情" className="w-8 flex justify-center"><Smile size={23} strokeWidth={1.4} /></button>
      <button type="button" aria-label="设置" className="w-8 flex justify-center">
        <svg viewBox="0 0 22 22" className="w-[22px] h-[22px]" fill="none" stroke="#0b1a45" strokeWidth="1.300" strokeLinejoin="round"><polygon points={gear} /><circle cx="11" cy="11" r="3" /></svg>
      </button>
    </div>
  );
}

function Wallpaper() {
  return (
    <svg viewBox="0 0 1574 983" preserveAspectRatio="none" className="absolute inset-0 w-full h-full">
      <defs>
        <linearGradient id="sky" x1="0" y1="0" x2="0" y2="1">
          <stop offset="0" stopColor="#1f62dc" /><stop offset=".5" stopColor="#0a4acc" /><stop offset=".8" stopColor="#043cb8" /><stop offset="1" stopColor="#0346c6" />
        </linearGradient>
        <linearGradient id="beam" x1="890" x2="1215" gradientUnits="userSpaceOnUse">
          <stop offset="0" stopColor="#4590ff" /><stop offset=".45" stopColor="#8fd0ff" /><stop offset="1" stopColor="#3f82f5" />
        </linearGradient>
        <linearGradient id="thin" x1="930" x2="1410" gradientUnits="userSpaceOnUse">
          <stop offset="0" stopColor="#2a66e0" stopOpacity=".2" /><stop offset=".35" stopColor="#4f90ff" /><stop offset="1" stopColor="#2a66e0" stopOpacity=".1" />
        </linearGradient>
        <filter id="glow" x="-20%" y="-20%" width="140%" height="140%"><feGaussianBlur stdDeviation="8" /></filter>
        <filter id="soft"><feGaussianBlur stdDeviation="1" /></filter>
      </defs>
      <rect width="1574" height="983" fill="url(#sky)" />
      <path d="M890 918Q1060 855 1215 750" fill="none" stroke="#2f78f5" strokeWidth="14" filter="url(#glow)" />
      <path d="M890 918Q1060 855 1215 750" fill="none" stroke="url(#beam)" strokeWidth="3.500" filter="url(#soft)" />
      <path d="M930 985Q1120 840 1410 770" fill="none" stroke="url(#thin)" strokeWidth="2" filter="url(#soft)" />
    </svg>
  );
}

export default function App() {
  return (
    <div className="relative w-full h-screen overflow-hidden bg-[#0340b8] font-['Open_Sans','Noto_Sans_CJK_SC',sans-serif]">
      <Wallpaper />
      <BackWindow />
      <WordWindow />
      <ExamWindow />
      <ImeBar />
    </div>
  );
}
